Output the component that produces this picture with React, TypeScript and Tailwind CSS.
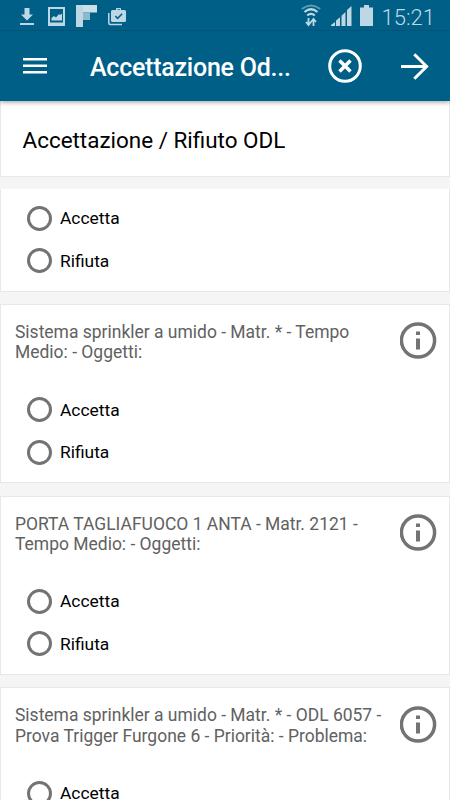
interface Order {
  description?: string[];
  height: string;
}

const orders: Order[] = [
  { height: "h-[103px]" },
  {
    description: ["Sistema sprinkler a umido - Matr. * - Tempo", "Medio: - Oggetti:"],
    height: "h-[179.5px]",
  },
  {
    description: ["PORTA TAGLIAFUOCO 1 ANTA - Matr. 2121 -", "Tempo Medio: - Oggetti:"],
    height: "h-[179.5px]",
  },
  {
    description: ["Sistema sprinkler a umido - Matr. * - ODL 6057 -", "Prova Trigger Furgone 6 - Priorità: - Problema:"],
    height: "h-[179.5px]",
  },
];

function StatusBar() {
  return (
    <div className="flex h-[31px] shrink-0 items-start border-b border-[#015377] text-[#bdd8e4]">
      <svg className="ml-[20px] h-[31px] w-[14px]" viewBox="0 0 14 31" fill="currentColor">
        <path d="M4.5 8h5v6.5H13L7 20.5 1 14.500h3.500zM0 23h14v2H0z" />
      </svg>
      <svg className="ml-[14px] h-[31px] w-[17px]" viewBox="0 0 17 31" fill="currentColor">
        <path fillRule="evenodd" d="M0 7h17v19H0zM2 9v13.500h13V9z" />
        <path d="M3.500 20.500V18l2.500-2 2 1.500 3-3.500 1 1 2-1.500v7z" />
      </svg>
      <svg className="ml-[11px] h-[31px] w-[21px]" viewBox="0 0 21 31">
        <path fill="#bdd8e4" d="M0 5h7v22H0z" />
        <path fill="#cbe1ea" d="M7 5h14v7.500H7z" />
        <path fill="#8db9cb" d="M7 12.500h7V20H7z" />
      </svg>
      <svg className="ml-[11px] h-[31px] w-[18px]" viewBox="0 0 18 31" fill="none" stroke="currentColor">
        <path fill="currentColor" stroke="none" fillRule="evenodd" d="M5 10h3V8.500Q8 8 8.500 8h4q.5 0 .5.500V10h3.500Q18 10 18 11.500v9q0 1.500-1.500 1.500h-12Q3 22 3 20.500v-9Q3 10 4.500 10zm4.500 0h2.500V9.300H9.500z" />
        <path strokeWidth="1.500" d="M.8 13v10q0 1.500 1.500 1.500H14" />
        <path stroke="#005f87" strokeWidth="1.500" d="m7.300 16 2.300 2.400 4.600-4.600" />
      </svg>
      <svg className="ml-[175px] h-[31px] w-[20px]" viewBox="0 0 20 31" fill="none" stroke="currentColor">
        <path strokeWidth="1.800" opacity=".5" d="M.8 9Q10 2 19.200 9" />
        <path strokeWidth="2.200" d="M3.500 12q6.500-5.500 13 0M6.200 15.500q3.800-3.300 7.600 0" />
        <path strokeWidth="1.800" d="M7.500 18v7M5 22l2.500 3 2.500-3M12.500 26v-7M10 22l2.500-3 2.500 3" />
      </svg>
      <svg className="ml-[10px] h-[31px] w-[21px]" viewBox="0 0 21 31" fill="currentColor">
        <path d="M0 26v-1l4-3v4zM5 26v-5.500l4-3.200V26zM10.500 26V15.800l4-3.800v14zM16 26V10l4.500-4v20z" />
      </svg>
      <svg className="ml-[8px] h-[31px] w-[13px]" viewBox="0 0 13 31" fill="currentColor">
        <path d="M4 5h5v2.500h4V26H0V7.500h4z" />
      </svg>
      <span className="ml-[8.500px] mt-[5px] text-[22px] leading-[26px] font-light whitespace-nowrap">15:21</span>
    </div>
  );
}

function Header() {
  return (
    <header className="relative z-10 flex h-[101px] shrink-0 flex-col bg-[#005f87] text-white shadow-[0_1px_5px_rgba(0,0,0,0.4)]">
      <StatusBar />
      <div className="flex h-[70px] items-center">
        <svg className="ml-[23px] h-4 w-6" viewBox="0 0 24 16" fill="currentColor">
          <path d="M0 0h24v2.500H0zM0 6.500h24V9H0zM0 13h24v2.500H0z" />
        </svg>
        <h1 className="mt-[3px] ml-[43px] w-[238px] text-[25px] leading-8 font-medium tracking-[-0.24px] whitespace-nowrap">Accettazione Od...</h1>
        <svg className="h-[34px] w-[34px]" viewBox="0 0 34 34" fill="none" stroke="currentColor">
          <circle cx="17" cy="17" r="15.300" strokeWidth="3" />
          <path strokeWidth="3.500" d="m11.500 11.500 11 11m0-11-11 11" />
        </svg>
        <svg className="ml-[39px] h-[27px] w-[28px]" viewBox="0 0 28 27" fill="none" stroke="currentColor" strokeWidth="3">
          <path d="M0 13.500h26M13.300 1.200 25.600 13.500 13.300 25.800" />
        </svg>
      </div>
    </header>
  );
}

function RadioOption({ label }: { label: string }) {
  return (
    <label className="flex h-[42.500px] items-center">
      <span className="h-[25px] w-[25px] rounded-full border-[3px] border-[#737373]" />
      <span className="ml-[8px] text-[17.400px] leading-5 text-black">{label}</span>
    </label>
  );
}

function InfoIcon() {
  return (
    <svg className="mt-[0.500px] h-[37px] w-[37px] shrink-0" viewBox="0 0 37 37" fill="#737373">
      <circle cx="18" cy="18.500" r="16.600" fill="none" stroke="#737373" strokeWidth="3.500" />
      <path d="M16 9.500h4V13h-4zM16 16.500h4v11h-4z" />
    </svg>
  );
}

function OrderCard({ order }: { order: Order }) {
  return (
    <section className={`${order.height} shrink-0 border border-[#e8e8e8] bg-white ${order.description ? "" : "border-t-white"}`}>
      {order.description ? (
        <div className="flex h-[83.500px] justify-between pt-[17px] pr-[12.500px] pl-[14px]">
          <p className="text-[17.480px] leading-[20.400px] whitespace-nowrap text-[#616161]">
            {order.description[0]}
            <br />
            {order.description[1]}
          </p>
          <InfoIcon />
        </div>
      ) : (
        <div className="h-[7.300px]" />
      )}
      <div className="pl-[26px]">
        <RadioOption label="Accetta" />
        <RadioOption label="Rifiuta" />
      </div>
    </section>
  );
}

export default function App() {
  return (
    <div className="flex h-[800px] w-[450px] flex-col overflow-hidden bg-[#f5f5f5] font-['Roboto',sans-serif]">
      <Header />
      <main className="flex min-h-0 flex-1 flex-col gap-[12.200px] overflow-hidden">
        <section className="flex h-[75.500px] shrink-0 items-center border border-t-0 border-[#e8e8e8] bg-white pt-1 pl-[21.500px]">
          <h2 className="text-[22.450px] leading-7 text-black">Accettazione / Rifiuto ODL</h2>
        </section>
        {orders.map((order, i) => (
          <OrderCard key={i} order={order} />
        ))}
      </main>
    </div>
  );
}
